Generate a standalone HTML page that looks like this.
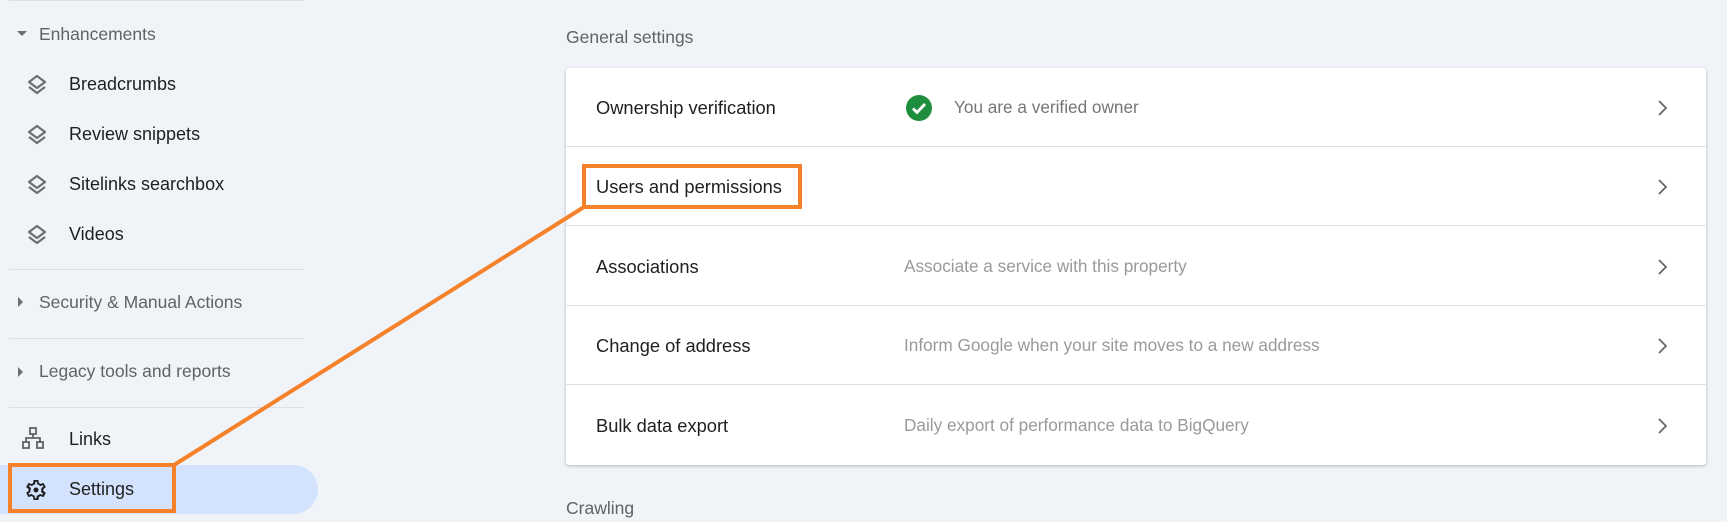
<!DOCTYPE html>
<html><head><style>
*{margin:0;padding:0;box-sizing:border-box}
body{width:1727px;height:522px;background:#f0f4f9;font-family:"Liberation Sans",sans-serif;position:relative;overflow:hidden;color:#1f1f1f}
.a{position:absolute;white-space:nowrap}
.side{font-size:18px;line-height:20px}
.hdr{color:#5f6368;font-size:17.5px}
.hr{position:absolute;left:24px;width:280px;height:1px;background:#dcdfe3}
.card{position:absolute;left:566px;top:68px;width:1140px;height:397px;background:#fff;border-radius:3px;box-shadow:0 1px 3px rgba(0,0,0,.25)}
.row{position:absolute;left:0;width:1140px;height:79px;border-bottom:1px solid #e0e0e0}
.row .t{position:absolute;left:30px;top:29px;font-size:18.3px;color:#1f1f1f}
.row .d{position:absolute;left:338px;top:29px;font-size:17.2px;color:#9a9a9a}
.row svg.ch{position:absolute;left:1090px;top:30px}
</style></head><body>
<div class="hr" style="top:0;left:9px;width:295px"></div>
<svg class="a" style="left:16px;top:30px" width="12" height="8"><path d="M1 1h10L6 6z" fill="#6b6f73"/></svg>
<div class="a side hdr" style="left:39px;top:24px">Enhancements</div>

<svg class="a" style="left:25px;top:73px" width="24" height="24" viewBox="0 0 24 24"><path d="M12 3L4 9l8 6 8-6zM4 14l8 6 8-6" fill="none" stroke="#6b6f73" stroke-width="2.2" stroke-linejoin="round"/></svg>
<div class="a side" style="left:69px;top:74px">Breadcrumbs</div>
<svg class="a" style="left:25px;top:123px" width="24" height="24" viewBox="0 0 24 24"><path d="M12 3L4 9l8 6 8-6zM4 14l8 6 8-6" fill="none" stroke="#6b6f73" stroke-width="2.2" stroke-linejoin="round"/></svg>
<div class="a side" style="left:69px;top:124px">Review snippets</div>
<svg class="a" style="left:25px;top:173px" width="24" height="24" viewBox="0 0 24 24"><path d="M12 3L4 9l8 6 8-6zM4 14l8 6 8-6" fill="none" stroke="#6b6f73" stroke-width="2.2" stroke-linejoin="round"/></svg>
<div class="a side" style="left:69px;top:174px">Sitelinks searchbox</div>
<svg class="a" style="left:25px;top:223px" width="24" height="24" viewBox="0 0 24 24"><path d="M12 3L4 9l8 6 8-6zM4 14l8 6 8-6" fill="none" stroke="#6b6f73" stroke-width="2.2" stroke-linejoin="round"/></svg>
<div class="a side" style="left:69px;top:224px">Videos</div>

<div class="hr" style="top:269px;left:9px;width:295px"></div>
<svg class="a" style="left:17px;top:296px" width="8" height="12"><path d="M1 1v10l5-5z" fill="#6b6f73"/></svg>
<div class="a side hdr" style="left:39px;top:292px">Security &amp; Manual Actions</div>
<div class="hr" style="top:338px;left:9px;width:295px"></div>
<svg class="a" style="left:17px;top:366px" width="8" height="12"><path d="M1 1v10l5-5z" fill="#6b6f73"/></svg>
<div class="a side hdr" style="left:39px;top:361px">Legacy tools and reports</div>
<div class="hr" style="top:407px;left:9px;width:295px"></div>

<svg class="a" style="left:22px;top:427px" width="22" height="22" viewBox="0 0 22 22"><g fill="none" stroke="#5f6368" stroke-width="1.8"><rect x="8" y="1" width="6" height="6"/><rect x="1" y="15" width="6" height="6"/><rect x="15" y="15" width="6" height="6"/><path d="M11 7v4M4 15v-4h14v4"/></g></svg>
<div class="a side" style="left:69px;top:429px">Links</div>

<div class="a" style="left:0;top:465px;width:318px;height:49px;background:#d3e3fd;border-radius:0 25px 25px 0"></div>
<svg class="a" style="left:24px;top:478px" width="24" height="24" viewBox="0 0 24 24"><path fill="#1f1f1f" d="M19.4 13c.04-.33.06-.66.06-1s-.02-.67-.06-1l2.1-1.65c.2-.15.24-.42.12-.64l-2-3.46c-.12-.22-.39-.3-.61-.22l-2.49 1c-.52-.4-1.08-.73-1.690-.98l-.38-2.65A.49.49 0 0 0 14 2h-4c-.25 0-.46.18-.49.42l-.38 2.65c-.61.25-1.17.59-1.69.98l-2.49-1c-.23-.09-.49 0-.61.22l-2 3.46c-.13.22-.07.49.12.64L4.56 11c-.04.33-.06.67-.06 1s.02.67.06 1l-2.1 1.65c-.2.15-.24.42-.12.64l2 3.46c.12.22.39.3.61.22l2.49-1c.52.4 1.08.73 1.69.98l.38 2.65c.03.24.24.42.49.42h4c.25 0 .46-.18.49-.42l.38-2.65c.61-.25 1.17-.59 1.69-.98l2.49 1c.23.09.49 0 .61-.22l2-3.46c.12-.22.07-.49-.12-.64zM17.2 11.6c.04.4.05.6.05.4 0 .27-.03.55-.07.95l-.14 1.13.89.7 1.08.84-.7 1.21-1.27-.51-1.04-.42-.9.68c-.43.32-.84.56-1.25.73l-1.060.43-.16 1.13-.2 1.35h-1.4l-.19-1.35-.16-1.13-1.06-.43c-.43-.18-.83-.41-1.23-.71l-.91-.7-1.06.43-1.27.51-.7-1.21 1.08-.84.89-.7-.14-1.13C6.73 12.57 6.7 12.27 6.7 12s.03-.57.07-.95l.14-1.13-.89-.7-1.08-.84.7-1.21 1.27.51 1.04.42.9-.68c.43-.32.84-.56 1.25-.73l1.06-.43.16-1.13.2-1.35h1.39l.19 1.35.16 1.13 1.06.43c.43.18.83.41 1.23.71l.91.7 1.06-.43 1.27-.51.7 1.21-1.07.85-.89.7z"/><circle cx="12" cy="12" r="2.5" fill="#1f1f1f"/></svg>
<div class="a side" style="left:69px;top:479px">Settings</div>

<div class="a hdr" style="left:566px;top:27px">General settings</div>
<div class="card">
 <div class="row" style="top:0">
  <div class="t">Ownership verification</div>
  <svg class="a" style="left:339px;top:26px" width="28" height="28" viewBox="0 0 28 28"><circle cx="14" cy="14" r="13" fill="#1e8e3e"/><path d="M8 14.5l4 4 8-8.5" fill="none" stroke="#fff" stroke-width="2.8"/></svg>
  <div class="d" style="left:388px;color:#757575">You are a verified owner</div>
  <svg class="ch" width="12" height="20"><path d="M3 3l7 7-7 7" fill="none" stroke="#5f6368" stroke-width="1.7"/></svg>
 </div>
 <div class="row" style="top:79px">
  <div class="t">Users and permissions</div>
  <svg class="ch" width="12" height="20"><path d="M3 3l7 7-7 7" fill="none" stroke="#5f6368" stroke-width="1.7"/></svg>
 </div>
 <div class="row" style="top:159px">
  <div class="t">Associations</div><div class="d">Associate a service with this property</div>
  <svg class="ch" width="12" height="20"><path d="M3 3l7 7-7 7" fill="none" stroke="#5f6368" stroke-width="1.7"/></svg>
 </div>
 <div class="row" style="top:238px">
  <div class="t">Change of address</div><div class="d">Inform Google when your site moves to a new address</div>
  <svg class="ch" width="12" height="20"><path d="M3 3l7 7-7 7" fill="none" stroke="#5f6368" stroke-width="1.7"/></svg>
 </div>
 <div class="row" style="top:318px;border-bottom:none">
  <div class="t">Bulk data export</div><div class="d">Daily export of performance data to BigQuery</div>
  <svg class="ch" width="12" height="20"><path d="M3 3l7 7-7 7" fill="none" stroke="#5f6368" stroke-width="1.7"/></svg>
 </div>
</div>
<div class="a hdr" style="left:566px;top:498px">Crawling</div>

<svg class="a" style="left:0;top:0" width="1727" height="522">
 <g fill="none" stroke="#f5822a" stroke-width="4">
  <rect x="10" y="465" width="164" height="46"/>
  <rect x="584" y="166" width="216" height="41"/>
  <path d="M174 465L584 207"/>
 </g>
</svg>
</body></html>
